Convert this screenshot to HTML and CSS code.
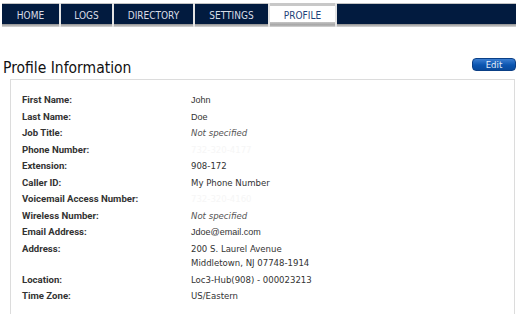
FILE: index.html
```html
<!DOCTYPE html>
<html lang="en">
  <head>
    <meta charset="UTF-8">
    <meta name="viewport" content="width=device-width">
    <title>Profile Information</title>
    <link rel="stylesheet" href="styles.css">
  </head>
  <body>
    <nav class="tabs">
      <a href="#" class="tab tab-home">HOME</a>
      <a href="#" class="tab tab-logs">LOGS</a>
      <a href="#" class="tab tab-directory">DIRECTORY</a>
      <a href="#" class="tab tab-settings">SETTINGS</a>
      <a href="#" class="tab tab-profile active">PROFILE</a>
    </nav>

    <div class="head">
      <h1>Profile Information</h1>
      <button type="button" class="edit">Edit</button>
    </div>

    <div class="panel">
      <dl class="fields">
        <dt>First Name:</dt>
        <dd class="plain">John</dd>
        <dt>Last Name:</dt>
        <dd class="plain">Doe</dd>
        <dt>Job Title:</dt>
        <dd class="none">Not specified</dd>
        <dt>Phone Number:</dt>
        <dd class="ghost">732-320-4177</dd>
        <dt>Extension:</dt>
        <dd>908-172</dd>
        <dt>Caller ID:</dt>
        <dd>My Phone Number</dd>
        <dt>Voicemail Access Number:</dt>
        <dd class="ghost">732-320-4160</dd>
        <dt>Wireless Number:</dt>
        <dd class="none">Not specified</dd>
        <dt>Email Address:</dt>
        <dd class="plain">Jdoe@email.com</dd>
        <dt>Address:</dt>
        <dd>200 S. Laurel Avenue<br>Middletown, NJ 07748-1914</dd>
        <dt>Location:</dt>
        <dd>Loc3-Hub(908) - 000023213</dd>
        <dt>Time Zone:</dt>
        <dd>US/Eastern</dd>
      </dl>
    </div>
  </body>
</html>
```

FILE: styles.css
```css
html {
  font-family: "DejaVu Sans Condensed", "DejaVu Sans", sans-serif;
  font-size: 11px;
  color: #333;
}
body {
  margin: 0;
  background: #fff;
}
.tabs {
  display: flex;
  height: 24px;
  margin: 3px 2px 0 2px;
  background: linear-gradient(#c4c4c4 0 1px, #021b3f 1px 21px, #8e8e8e 21px, #d8d8d8 24px);
}
.tab {
  display: flex;
  align-items: center;
  justify-content: center;
  height: 100%;
  border-right: 2px solid #e4e4e4;
  color: #d8dde6;
  text-decoration: none;
  font-size: 10px;
}
.tab-home { width: 57px; }
.tab-logs { width: 51px; }
.tab-directory { width: 79px; }
.tab-settings { width: 73px; }
.tab-profile { width: 65px; }
.tab.active {
  background: linear-gradient(#c8c8c8 0 3px, #fff 3px 19px, #c6c6c6 19px, #a4a4a4 22px, #d8d8d8 24px);
  color: #1d3f78;
}
.head {
  display: flex;
  justify-content: space-between;
  align-items: flex-start;
  margin: 31px 2px 0 3px;
}
h1 {
  margin: 0;
  font-size: 15.5px;
  font-weight: normal;
  line-height: 20px;
  color: #111;
}
.edit {
  width: 44px;
  height: 13px;
  padding: 0;
  border: 1px solid #0b3f86;
  border-radius: 4px;
  background: linear-gradient(#3c7fd2, #0b55b0 55%, #094a9c);
  color: #e6eef9;
  font: inherit;
  font-size: 9.5px;
  line-height: 11px;
}
.panel {
  margin: 1px 3px 0 10px;
  padding: 12px 0 24px 11px;
  border: 1px solid #dcdcdc;
}
.fields {
  display: grid;
  grid-template-columns: 169px 1fr;
  margin: 0;
  line-height: 14.5px;
  font-size: 9.5px;
}
.fields dt,
.fields dd {
  margin: 0;
  padding: 1px 0;
}
.fields dt {
  font-family: Roboto, "Liberation Sans", sans-serif;
  font-size: 9.6px;
  font-weight: bold;
  color: #333;
}
.fields .none {
  font-style: italic;
  color: #555;
}
.fields .ghost {
  color: #f6f6f6;
}
.fields .plain {
  font-family: "Liberation Sans", Arial, sans-serif;
  font-size: 9px;
}
```
